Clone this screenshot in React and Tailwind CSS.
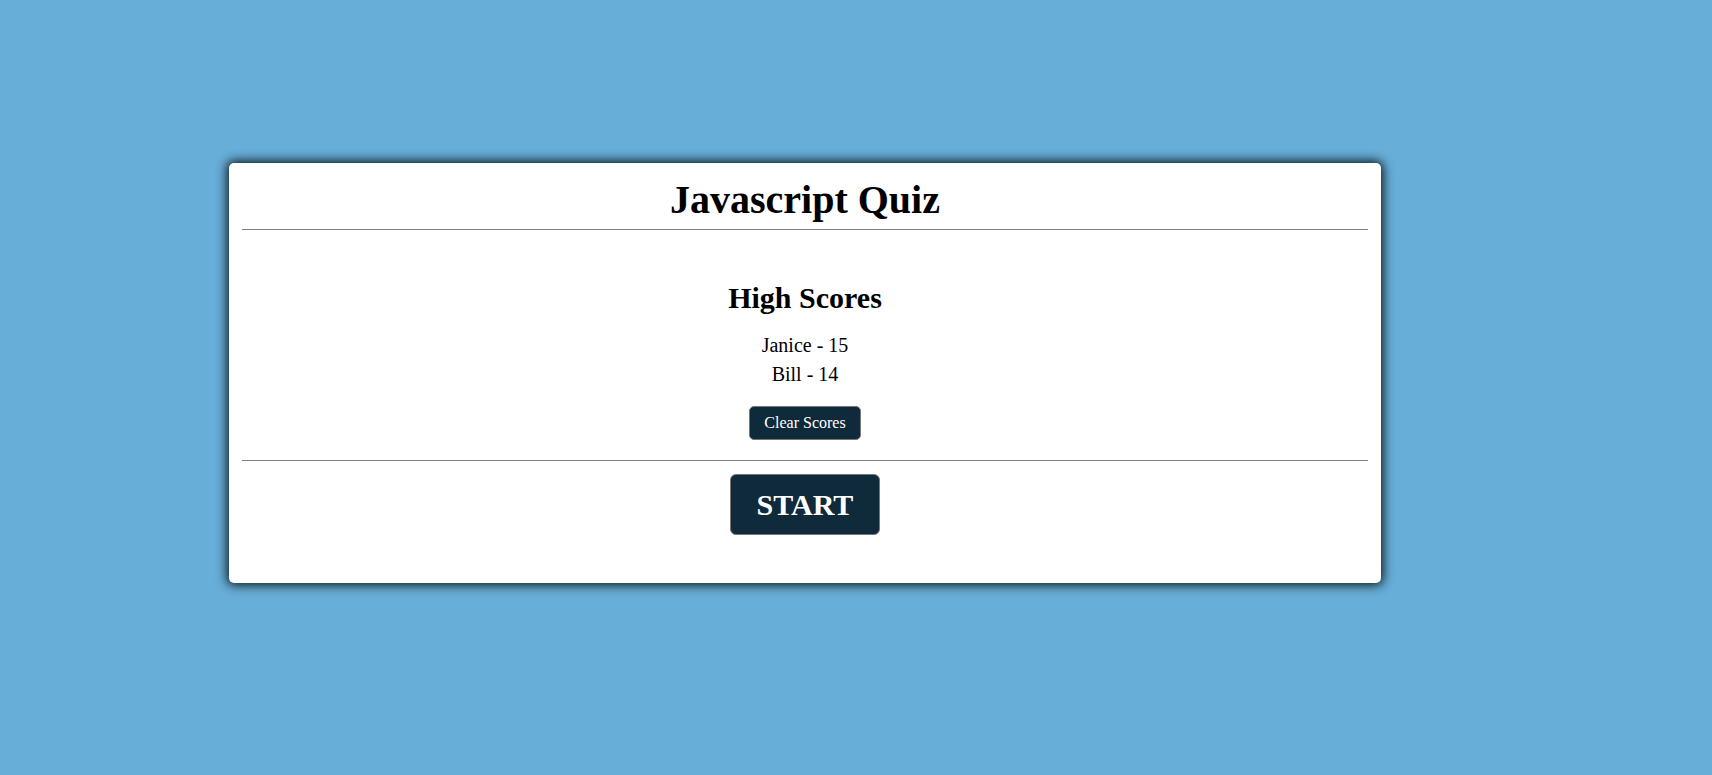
import React from "react";

const scores = [
    { name: "Janice", score: 15 },
    { name: "Bill", score: 14 },
];

const App = () => {
    return (
        <div className="min-h-screen bg-[#67aed8] pt-[163px] pl-[229px] font-['Liberation_Serif',serif] text-[20px] text-black">
            <div className="w-[1152px] h-[420px] bg-white rounded-[5px] shadow-[0_0_11px_2px_rgba(0,0,0,0.9)] px-[13px] pt-[14px]">
                <h1 className="text-[40px] leading-[46px] font-bold text-center">Javascript Quiz</h1>
                <div className="mt-[6px] border-t border-[#808080]"></div>

                <div className="flex flex-col items-center pt-[51px]">
                    <h2 className="text-[30px] leading-[34px] font-bold">High Scores</h2>
                    <ul className="mt-[16px] text-center">
                        {scores.map((s) => (
                            <li key={s.name} className="leading-[29px]">
                                {s.name} - {s.score}
                            </li>
                        ))}
                    </ul>
                    <button className="mt-[17px] bg-[#0f2a3b] text-white text-[16px] leading-[18px] px-[14px] py-[7px] rounded-[5px] border border-[#777]">
                        Clear Scores
                    </button>
                </div>

                <div className="mt-[20px] border-t border-[#808080]"></div>

                <div className="flex justify-center pt-[13px]">
                    <button className="bg-[#0f2a3b] text-white text-[30px] font-bold leading-[35px] px-[26px] py-[12px] rounded-[6px] border border-[#777]">
                        START
                    </button>
                </div>
            </div>
        </div>
    );
};

export default App;
